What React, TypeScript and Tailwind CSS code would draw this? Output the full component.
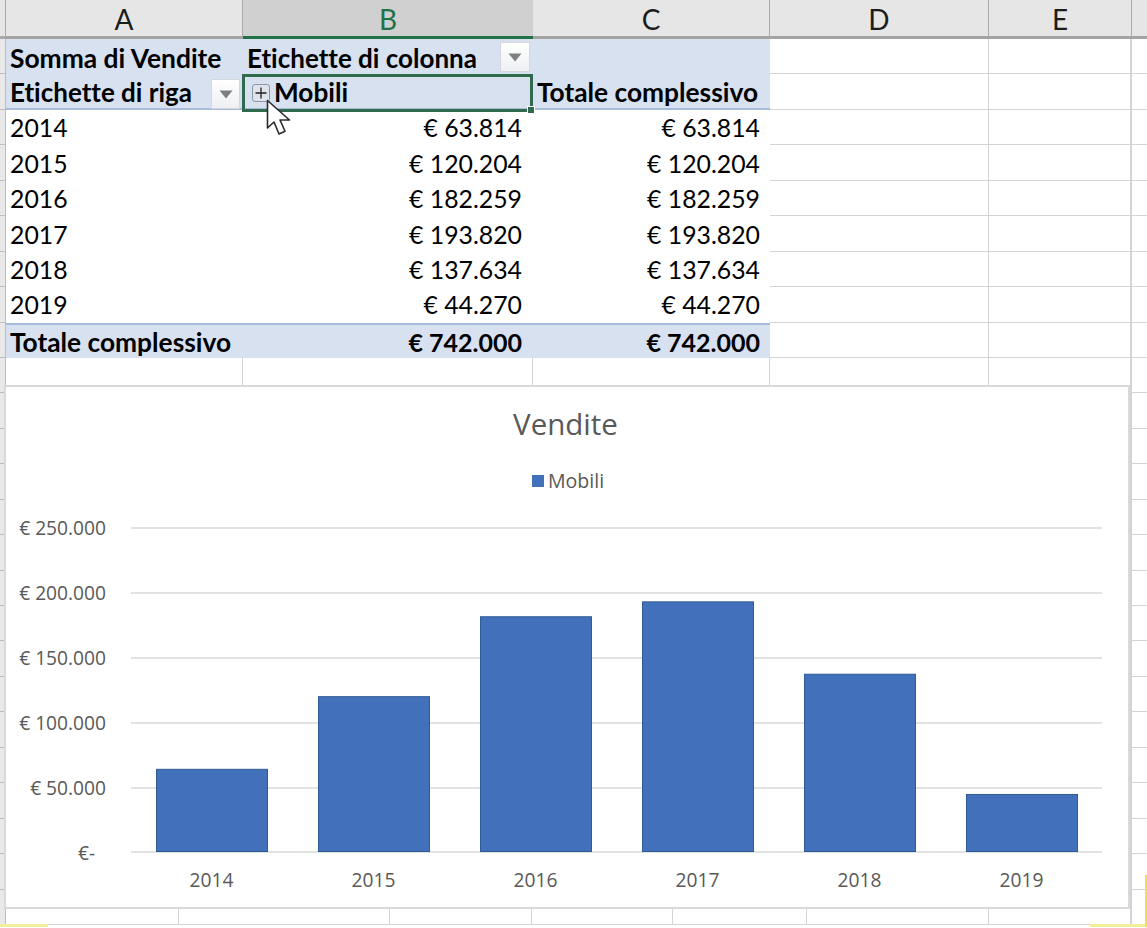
const cellFont = "font-['Lato','Noto_Sans',sans-serif] [font-variant-ligatures:none]"

const years = [
  { year: "2014", value: "€ 63.814", amount: 63814 },
  { year: "2015", value: "€ 120.204", amount: 120204 },
  { year: "2016", value: "€ 182.259", amount: 182259 },
  { year: "2017", value: "€ 193.820", amount: 193820 },
  { year: "2018", value: "€ 137.634", amount: 137634 },
  { year: "2019", value: "€ 44.270", amount: 44270 },
]

const axis = [
  { label: "€ 250.000", y: 143 },
  { label: "€ 200.000", y: 208 },
  { label: "€ 150.000", y: 273 },
  { label: "€ 100.000", y: 338 },
  { label: "€ 50.000", y: 403 },
  { label: "", y: 467 },
]

function FilterButton({ className }: { className: string }) {
  return (
    <span className={`absolute flex h-[30px] items-center justify-center border border-[#d4d8de] bg-gradient-to-b from-white to-[#eef0f3] ${className}`}>
      <svg width="14" height="9" viewBox="0 0 14 9">
        <path d="M0.5 0.5h13L7 8.5z" fill="#7f7f7f" />
      </svg>
    </span>
  )
}

function ColumnHeader({ label, width, active }: { label: string; width: string; active?: boolean }) {
  return (
    <div
      className={`flex h-[39px] shrink-0 items-center justify-center border-b-[3px] pt-[2px] text-[28px] ${width} ${
        active
          ? "border-[#217346] bg-[#d0d0d0] text-[#217346]"
          : "border-r border-[#a9a9a9] border-b-[#a3a3a3] bg-[#e6e6e6] text-[#1c1c1c]"
      }`}
    >
      {label}
    </div>
  )
}

function Cell({ width, className = "", children }: { width: string; className?: string; children?: React.ReactNode }) {
  return <div className={`flex h-full shrink-0 items-center whitespace-nowrap pt-[2px] text-[24.8px] leading-none ${width} ${className}`}>{children}</div>
}

function EmptyCells() {
  return (
    <>
      <Cell width="w-[219px]" className="border-r border-b border-[#d4d4d4]" />
      <Cell width="w-[143px]" className="border-r-2 border-b border-[#d4d4d4]" />
      <Cell width="w-[16px]" className="border-b border-[#d4d4d4]" />
    </>
  )
}

function RowGutter() {
  return <Cell width="w-[6px]" className="border-r border-b border-[#bdbdbd] bg-[#e9e9e9]" />
}

function Cursor() {
  return (
    <svg className="absolute left-[266px] top-[99px]" width="27" height="40" viewBox="0 0 27 40">
      <path d="M1.5 1.5V29l6.5-6 5 12 6-2.7-5-11.3h9.5z" fill="#fff" stroke="#2b2b2b" strokeWidth="1.6" strokeLinejoin="round" />
    </svg>
  )
}

function Chart() {
  return (
    <div className="absolute left-[4px] top-[385px] flex h-[524px] w-[1126px] flex-col items-center border-2 border-[#d9d9d9] bg-white font-['Open_Sans',sans-serif] text-[#595959]">
      <h2 className="mt-[17px] pr-[3px] text-[29.5px] leading-[40px]">Vendite</h2>
      <div className="mt-[25px] ml-[2px] flex items-center gap-[4px] text-[19.6px] leading-[24px]">
        <span className="h-[12px] w-[12px] bg-[#4270bb]" />
        Mobili
      </div>
      <svg className="absolute left-[-2px] top-[-2px]" width="1126" height="524" viewBox="0 0 1126 524">
        {axis.map((tick) => (
          <g key={tick.y}>
            <line x1="127" x2="1098" y1={tick.y} y2={tick.y} stroke="#d9d9d9" strokeWidth="1.5" />
            <text x="102" y={tick.y + 7} textAnchor="end" fontSize="19.2" fill="#595959" className="font-['Open_Sans',sans-serif]">
              {tick.label}
            </text>
          </g>
        ))}
        <text x="74" y="475" fontSize="19.2" fill="#595959" className="font-['Open_Sans',sans-serif]">€-</text>
        {years.map((item, i) => {
          const height = (item.amount / 250000) * 322
          return (
            <g key={item.year}>
              <rect x={152.5 + i * 162} y={466.5 - height} width="111" height={height} fill="#4270bb" stroke="#2f5b94" strokeWidth="1" />
              <text x={207.5 + i * 162} y="502" textAnchor="middle" fontSize="19.2" fill="#595959" className="font-['Open_Sans',sans-serif]">
                {item.year}
              </text>
            </g>
          )
        })}
      </svg>
    </div>
  )
}

export default function App() {
  const bottomRows = Array.from({ length: 15 })

  return (
    <div className={`relative h-[928px] w-[1147px] overflow-hidden bg-white text-black ${cellFont}`}>
      {/* column headers */}
      <div className="flex">
        <div className="h-[39px] w-[6px] shrink-0 border-r border-b-[3px] border-[#a9a9a9] bg-[#e6e6e6]" />
        <ColumnHeader label="A" width="w-[237px]" />
        <ColumnHeader label="B" width="w-[290px]" active />
        <ColumnHeader label="C" width="w-[237px]" />
        <ColumnHeader label="D" width="w-[219px]" />
        <ColumnHeader label="E" width="w-[143px]" />
        <div className="h-[39px] flex-1 border-b-[3px] border-[#a3a3a3] bg-[#e6e6e6]" />
      </div>

      {/* pivot header rows */}
      <div className="flex h-[35.44px]">
        <RowGutter />
        <Cell width="w-[237px]" className="bg-[#d7e1f0] pl-[4px] text-[26.4px] font-bold">Somma di Vendite</Cell>
        <Cell width="w-[290px]" className="bg-[#d7e1f0] pl-[4px] text-[26px] font-bold">Etichette di colonna</Cell>
        <Cell width="w-[237px]" className="bg-[#d7e1f0]" />
        <EmptyCells />
      </div>
      <div className="flex h-[35.44px]">
        <RowGutter />
        <Cell width="w-[237px]" className="border-b-2 border-[#a9bbdb] bg-[#d7e1f0] pl-[4px] text-[26px] font-bold">Etichette di riga</Cell>
        <Cell width="w-[290px]" className="border-b-2 border-[#a9bbdb] bg-[#d7e1f0] pl-[31px] text-[26.2px] font-bold">Mobili</Cell>
        <Cell width="w-[237px]" className="justify-end border-b-2 border-[#a9bbdb] bg-[#d7e1f0] pr-[12px] text-[26.3px] font-bold">Totale complessivo</Cell>
        <EmptyCells />
      </div>

      {/* pivot values */}
      {years.map((item) => (
        <div key={item.year} className="flex h-[35.44px]">
          <RowGutter />
          <Cell width="w-[237px]" className="pl-[4px]">{item.year}</Cell>
          <Cell width="w-[290px]" className="justify-end pr-[11px]">{item.value}</Cell>
          <Cell width="w-[237px]" className="justify-end pr-[10px]">{item.value}</Cell>
          <EmptyCells />
        </div>
      ))}

      {/* grand total */}
      <div className="flex h-[35.44px]">
        <RowGutter />
        <Cell width="w-[237px]" className="border-t-2 border-[#a9bbdb] bg-[#d7e1f0] pl-[4px] text-[26.3px] font-bold">Totale complessivo</Cell>
        <Cell width="w-[290px]" className="justify-end border-t-2 border-[#a9bbdb] bg-[#d7e1f0] pr-[11px] text-[25px] font-bold">€ 742.000</Cell>
        <Cell width="w-[237px]" className="justify-end border-t-2 border-[#a9bbdb] bg-[#d7e1f0] pr-[10px] text-[25px] font-bold">€ 742.000</Cell>
        <EmptyCells />
      </div>

      {/* empty grid behind the chart */}
      <div className="flex h-[35.44px]">
        <RowGutter />
        <Cell width="w-[237px]" className="border-r border-b border-[#d4d4d4]" />
        <Cell width="w-[290px]" className="border-r border-b border-[#d4d4d4]" />
        <Cell width="w-[237px]" className="border-r border-b border-[#d4d4d4]" />
        <EmptyCells />
      </div>
      {bottomRows.map((_, i) => (
        <div key={i} className="flex h-[35.44px]">
          <RowGutter />
          <Cell width="w-[173px]" className="border-r border-b border-[#d4d4d4]" />
          <Cell width="w-[211px]" className="border-r border-b border-[#d4d4d4]" />
          <Cell width="w-[142px]" className="border-r border-b border-[#d4d4d4]" />
          <Cell width="w-[141px]" className="border-r border-b border-[#d4d4d4]" />
          <Cell width="w-[134px]" className="border-r border-b border-[#d4d4d4]" />
          <Cell width="w-[182px]" className="border-r border-b border-[#d4d4d4]" />
          <Cell width="w-[143px]" className="border-r-2 border-b border-[#d4d4d4]" />
          <Cell width="w-[16px]" className="border-b border-[#d4d4d4]" />
        </div>
      ))}

      {/* selected cell, on top of the pivot */}
      <div className="absolute left-[242px] top-[74px] h-[38px] w-[291px] border-[3px] border-[#2f6b4c]" />
      <div className="absolute left-[527px] top-[106px] h-[8px] w-[8px] border border-white bg-[#2f6b4c]" />
      <FilterButton className="left-[500px] top-[42px] w-[30px]" />
      <FilterButton className="left-[211px] top-[79px] w-[29px]" />
      <span className="absolute left-[252px] top-[84px] flex h-[18px] w-[18px] items-center justify-center rounded-[3px] border border-[#8d96a5] bg-[#dfe3ea]">
        <svg width="12" height="12" viewBox="0 0 12 12">
          <path d="M6 0.5v11M0.5 6h11" stroke="#222" strokeWidth="1.3" />
        </svg>
      </span>
      <Cursor />

      <Chart />

      {/* yellow marks at the edges */}
      <div className="absolute left-0 top-[924px] h-[3px] w-[48px] bg-[#f3ee9a]" />
      <div className="absolute left-[1090px] top-[924px] h-[3px] w-[57px] bg-[#f3ee9a]" />
      <div className="absolute left-[1145px] top-[875px] h-[52px] w-[2px] bg-[#ece24f]" />
    </div>
  )
}
